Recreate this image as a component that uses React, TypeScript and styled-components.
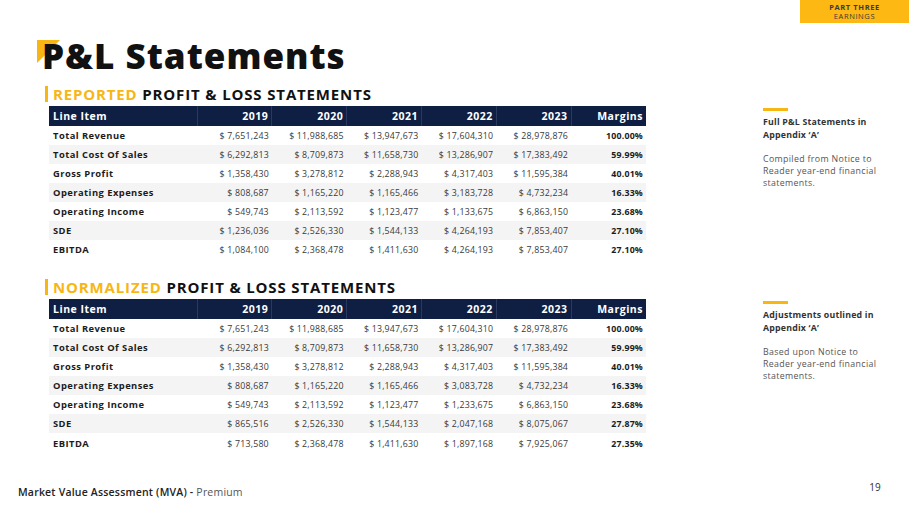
import styled, { createGlobalStyle } from 'styled-components';

const GlobalStyle = createGlobalStyle`
  html, body {
    margin: 0;
    padding: 0;
    background: #ffffff;
  }
  body {
    font-family: 'Open Sans', 'Liberation Sans', sans-serif;
    color: #222;
  }
`;

interface IRow {
  label: string;
  values: string[];
  margin: string;
}

interface IStatement {
  accent: string;
  rows: IRow[];
  noteTitle: string[];
  noteBody: string[];
}

const years = ['2019', '2020', '2021', '2022', '2023'];

const statements: IStatement[] = [
  {
    accent: 'REPORTED',
    noteTitle: ['Full P&L Statements in', 'Appendix ‘A’'],
    noteBody: ['Compiled from Notice to', 'Reader year-end financial', 'statements.'],
    rows: [
      { label: 'Total Revenue', values: ['$ 7,651,243', '$ 11,988,685', '$ 13,947,673', '$ 17,604,310', '$ 28,978,876'], margin: '100.00%' },
      { label: 'Total Cost Of Sales', values: ['$ 6,292,813', '$ 8,709,873', '$ 11,658,730', '$ 13,286,907', '$ 17,383,492'], margin: '59.99%' },
      { label: 'Gross Profit', values: ['$ 1,358,430', '$ 3,278,812', '$ 2,288,943', '$ 4,317,403', '$ 11,595,384'], margin: '40.01%' },
      { label: 'Operating Expenses', values: ['$ 808,687', '$ 1,165,220', '$ 1,165,466', '$ 3,183,728', '$ 4,732,234'], margin: '16.33%' },
      { label: 'Operating Income', values: ['$ 549,743', '$ 2,113,592', '$ 1,123,477', '$ 1,133,675', '$ 6,863,150'], margin: '23.68%' },
      { label: 'SDE', values: ['$ 1,236,036', '$ 2,526,330', '$ 1,544,133', '$ 4,264,193', '$ 7,853,407'], margin: '27.10%' },
      { label: 'EBITDA', values: ['$ 1,084,100', '$ 2,368,478', '$ 1,411,630', '$ 4,264,193', '$ 7,853,407'], margin: '27.10%' },
    ],
  },
  {
    accent: 'NORMALIZED',
    noteTitle: ['Adjustments outlined in', 'Appendix ‘A’'],
    noteBody: ['Based upon Notice to', 'Reader year-end financial', 'statements.'],
    rows: [
      { label: 'Total Revenue', values: ['$ 7,651,243', '$ 11,988,685', '$ 13,947,673', '$ 17,604,310', '$ 28,978,876'], margin: '100.00%' },
      { label: 'Total Cost Of Sales', values: ['$ 6,292,813', '$ 8,709,873', '$ 11,658,730', '$ 13,286,907', '$ 17,383,492'], margin: '59.99%' },
      { label: 'Gross Profit', values: ['$ 1,358,430', '$ 3,278,812', '$ 2,288,943', '$ 4,317,403', '$ 11,595,384'], margin: '40.01%' },
      { label: 'Operating Expenses', values: ['$ 808,687', '$ 1,165,220', '$ 1,165,466', '$ 3,083,728', '$ 4,732,234'], margin: '16.33%' },
      { label: 'Operating Income', values: ['$ 549,743', '$ 2,113,592', '$ 1,123,477', '$ 1,233,675', '$ 6,863,150'], margin: '23.68%' },
      { label: 'SDE', values: ['$ 865,516', '$ 2,526,330', '$ 1,544,133', '$ 2,047,168', '$ 8,075,067'], margin: '27.87%' },
      { label: 'EBITDA', values: ['$ 713,580', '$ 2,368,478', '$ 1,411,630', '$ 1,897,168', '$ 7,925,067'], margin: '27.35%' },
    ],
  },
];

const yellow = '#f8b614';
const navy = '#0f1f43';

const Page = styled.div`
  width: 909px;
  height: 508px;
  display: flex;
  flex-direction: column;
  overflow: hidden;
  background: #fff;
`;

const TopBar = styled.div`
  display: flex;
  justify-content: flex-end;
  height: 23px;
`;

const Badge = styled.div`
  width: 109px;
  height: 23px;
  background: #fdb813;
  display: flex;
  flex-direction: column;
  align-items: center;
  justify-content: center;
  font-size: 7.5px;
  line-height: 9px;
  color: #3b3b3b;
  letter-spacing: 0.6px;

  > b {
    font-weight: 700;
  }
`;

const Content = styled.div`
  padding-left: 37px;
  display: flex;
  flex-direction: column;
`;

const TitleWrap = styled.div`
  position: relative;
  margin-top: 13px;
  height: 40px;
`;

const Corner = styled.svg`
  position: absolute;
  left: 0;
  top: 4px;
  width: 23px;
  height: 23px;
`;

const Title = styled.h1`
  position: relative;
  margin: 0 0 0 5px;
  font-size: 35px;
  line-height: 40px;
  font-weight: 800;
  color: #111;
  letter-spacing: 1px;
`;

const Section = styled.div<{ gap: number }>`
  display: grid;
  grid-template-columns: 609px 126px;
  grid-template-areas:
    'heading .'
    'table note';
  column-gap: 117px;
  margin-top: ${({ gap }) => gap}px;
`;

const Heading = styled.h2`
  grid-area: heading;
  margin: 0 0 4px 8px;
  height: 16px;
  display: flex;
  align-items: center;
  font-size: 15px;
  font-weight: 700;
  color: #111;
  letter-spacing: 0.85px;
  white-space: pre;

  &::before {
    content: '';
    width: 3px;
    height: 16px;
    margin-right: 5px;
    background: ${yellow};
  }

  > em {
    font-style: normal;
    color: ${yellow};
  }
`;

const Table = styled.table`
  grid-area: table;
  margin-left: 12px;
  width: 597px;
  border-collapse: collapse;
  table-layout: fixed;
`;

const HeadCell = styled.th<{ first?: boolean }>`
  background: ${navy};
  color: #fff;
  height: 20px;
  padding: 0 ${({ first }) => (first ? '0 0 4px' : '3px 0 0')};
  text-align: ${({ first }) => (first ? 'left' : 'right')};
  font-size: 10.5px;
  font-weight: 700;
  letter-spacing: 0.5px;
  border-left: ${({ first }) => (first ? 'none' : '1px solid #2a3960')};
`;

const Row = styled.tr<{ striped: boolean; tall?: boolean }>`
  background: ${({ striped }) => (striped ? '#f4f4f4' : 'transparent')};
  height: ${({ tall }) => (tall ? '21px' : '19px')};
`;

const LabelCell = styled.td`
  padding: 0 0 0 4px;
  font-size: 9.4px;
  font-weight: 700;
  letter-spacing: 0.45px;
  color: #1c1c1c;
  white-space: nowrap;
`;

const ValueCell = styled.td<{ bold?: boolean }>`
  padding: 0 3px 0 0;
  text-align: right;
  font-size: 8.8px;
  font-weight: ${({ bold }) => (bold ? 700 : 400)};
  letter-spacing: 0.2px;
  color: ${({ bold }) => (bold ? '#1c1c1c' : '#3a3a3a')};
  white-space: nowrap;
`;

const Note = styled.div`
  grid-area: note;
  margin-top: 2px;
  display: flex;
  flex-direction: column;

  &::before {
    content: '';
    width: 25px;
    height: 3px;
    background: ${yellow};
    margin-bottom: 5px;
  }
`;

const NoteTitle = styled.p`
  margin: 0 0 11px;
  font-size: 8.8px;
  line-height: 13px;
  font-weight: 700;
  letter-spacing: 0.2px;
  color: #333;
`;

const NoteBody = styled.p`
  margin: 0;
  font-size: 8.8px;
  line-height: 12px;
  letter-spacing: 0.35px;
  color: #555;
`;

const Footer = styled.div`
  margin-top: auto;
  display: flex;
  justify-content: space-between;
  align-items: flex-end;
  padding: 0 28px 10px 18px;
  font-size: 10.5px;
  line-height: 12px;
  letter-spacing: 0.2px;
`;

const FooterText = styled.span`
  color: #222;
  font-weight: 600;

  > span {
    color: #555;
    font-weight: 400;
  }
`;

const PageNumber = styled.span`
  padding-bottom: 5px;
  color: #333;
  font-size: 10px;
`;

export default function App() {
  return (
    <Page>
      <GlobalStyle />
      <TopBar>
        <Badge>
          <b>PART THREE</b>
          <span>EARNINGS</span>
        </Badge>
      </TopBar>
      <Content>
        <TitleWrap>
          <Corner viewBox="0 0 23 23">
            <polygon points="0,0 23,0 0,23" fill={yellow} />
          </Corner>
          <Title>P&amp;L Statements</Title>
        </TitleWrap>
        {statements.map((statement, index) => (
          <Section key={statement.accent} gap={index === 0 ? 10 : 20}>
            <Heading>
              <em>{statement.accent}</em> PROFIT &amp; LOSS STATEMENTS
            </Heading>
            <Table>
              <colgroup>
                <col style={{ width: 148 }} />
                {[...years, 'Margins'].map((y) => (
                  <col key={y} style={{ width: 74.8 }} />
                ))}
              </colgroup>
              <thead>
                <tr>
                  <HeadCell first>Line Item</HeadCell>
                  {years.map((y) => (
                    <HeadCell key={y}>{y}</HeadCell>
                  ))}
                  <HeadCell>Margins</HeadCell>
                </tr>
              </thead>
              <tbody>
                {statement.rows.map((row, i) => (
                  <Row
                    key={row.label}
                    striped={i % 2 === 1}
                    tall={index === 1 && i === statement.rows.length - 1}
                  >
                    <LabelCell>{row.label}</LabelCell>
                    {row.values.map((v, j) => (
                      <ValueCell key={j}>{v}</ValueCell>
                    ))}
                    <ValueCell bold>{row.margin}</ValueCell>
                  </Row>
                ))}
              </tbody>
            </Table>
            <Note>
              <NoteTitle>
                {statement.noteTitle.map((line) => (
                  <span key={line}>
                    {line}
                    <br />
                  </span>
                ))}
              </NoteTitle>
              <NoteBody>
                {statement.noteBody.map((line) => (
                  <span key={line}>
                    {line}
                    <br />
                  </span>
                ))}
              </NoteBody>
            </Note>
          </Section>
        ))}
      </Content>
      <Footer>
        <FooterText>
          Market Value Assessment (MVA) - <span>Premium</span>
        </FooterText>
        <PageNumber>19</PageNumber>
      </Footer>
    </Page>
  );
}
